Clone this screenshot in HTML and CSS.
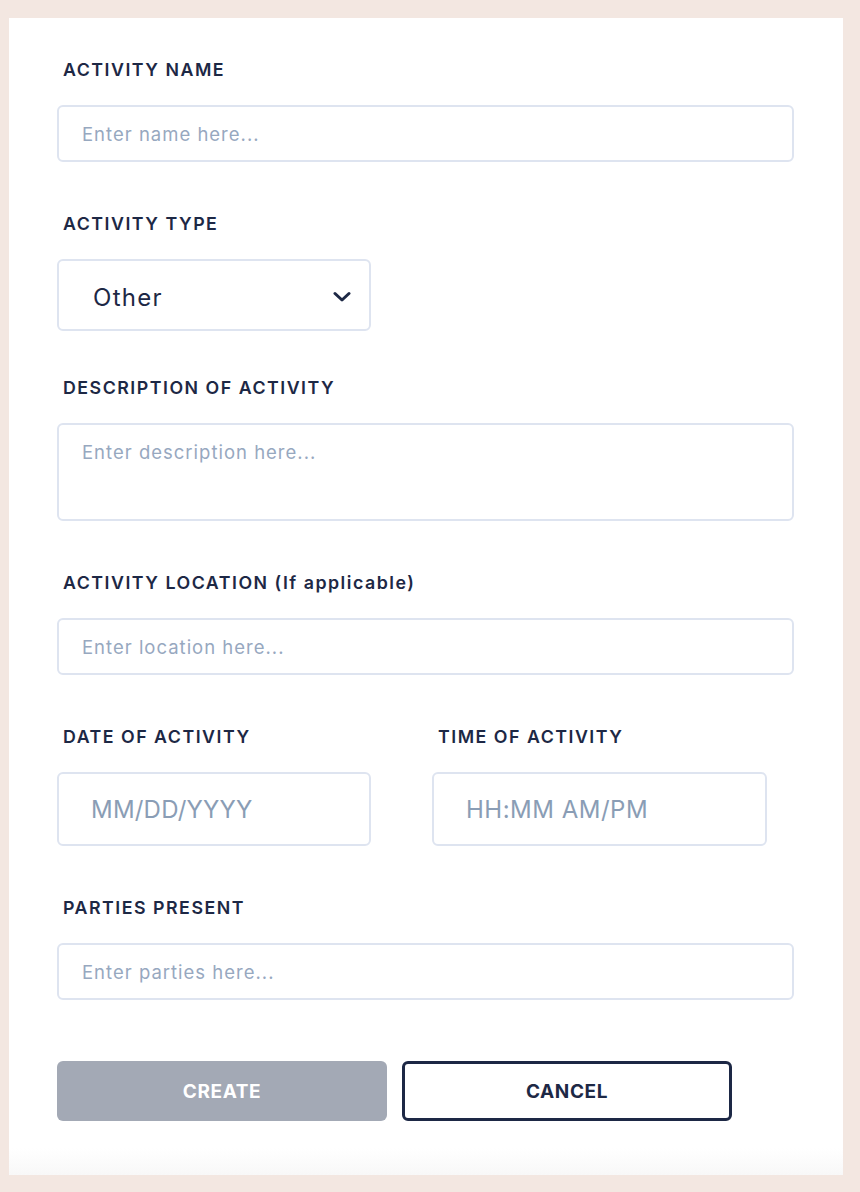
FILE: index.html
```html
<!DOCTYPE html>
<html lang="en">
<head>
<meta charset="utf-8">
<title>Create Activity</title>
<link rel="stylesheet" href="styles.css">
</head>
<body>
<form class="card">
  <div class="field">
    <label class="label" for="name">ACTIVITY NAME</label>
    <input class="input" id="name" type="text" placeholder="Enter name here...">
  </div>
  <div class="field field-select">
    <label class="label">ACTIVITY TYPE</label>
    <div class="select" role="combobox">
      <span class="select-value">Other</span>
      <svg class="chevron" width="18" height="12" viewBox="0 0 18 12"><path d="M2 2.5 L9 9 L16 2.5" fill="none" stroke="#1d2845" stroke-width="3" stroke-linecap="round" stroke-linejoin="round"/></svg>
    </div>
  </div>
  <div class="field">
    <label class="label" for="desc">DESCRIPTION OF ACTIVITY</label>
    <textarea class="input textarea" id="desc" placeholder="Enter description here..."></textarea>
  </div>
  <div class="field">
    <label class="label" for="loc">ACTIVITY LOCATION (If applicable)</label>
    <input class="input" id="loc" type="text" placeholder="Enter location here...">
  </div>
  <div class="row">
    <div class="field col-date">
      <label class="label" for="date">DATE OF ACTIVITY</label>
      <input class="input big" id="date" type="text" placeholder="MM/DD/YYYY">
    </div>
    <div class="field col-time">
      <label class="label" for="time">TIME OF ACTIVITY</label>
      <input class="input big big-time" id="time" type="text" placeholder="HH:MM AM/PM">
    </div>
  </div>
  <div class="field">
    <label class="label" for="parties">PARTIES PRESENT</label>
    <input class="input" id="parties" type="text" placeholder="Enter parties here...">
  </div>
  <div class="actions">
    <button type="button" class="btn btn-create">CREATE</button>
    <button type="button" class="btn btn-cancel">CANCEL</button>
  </div>
</form>
</body>
</html>
```
FILE: styles.css
```css
* { box-sizing: border-box; }
html, body {
  margin: 0;
  padding: 0;
}
body {
  background: #f3e7e1;
  font-family: "Inter", "Open Sans", sans-serif;
  color: #1d2845;
  height: 1192px;
  overflow: hidden;
}
.card {
  margin: 18px 0 0 9px;
  width: 834px;
  height: 1157px;
  background: linear-gradient(to bottom, #ffffff 0, #ffffff 1130px, #f8f8f8 1157px);
  padding: 42px 49px 0 48px;
  display: flex;
  flex-direction: column;
}
.field {
  display: flex;
  flex-direction: column;
  margin-bottom: 52px;
}
.field-select { margin-bottom: 47px; }
.label {
  display: block;
  font-size: 17.8px;
  line-height: 20px;
  font-weight: 600;
  letter-spacing: 1.5px;
  color: #1d2845;
  padding-left: 6px;
  margin-bottom: 25px;
  white-space: nowrap;
}
.input {
  display: block;
  width: 100%;
  height: 57px;
  border: 2.5px solid #dee4f0;
  border-radius: 6px;
  padding: 0 0 0 23px;
  font-family: inherit;
  font-size: 18.5px;
  letter-spacing: 1px;
  color: #1d2845;
  background: #fff;
  outline: none;
}
.input::placeholder { color: #97a8bf; opacity: 1; }
.textarea {
  height: 98px;
  resize: none;
  padding-top: 16px;
  line-height: 22px;
}
.select {
  width: 314px;
  height: 72px;
  border: 2.5px solid #dee4f0;
  border-radius: 6px;
  display: flex;
  align-items: center;
  justify-content: space-between;
  padding: 4px 18px 0 34px;
}
.select-value {
  font-size: 24px;
  letter-spacing: 1.3px;
  color: #1d2845;
}
.chevron { display: block; margin-top: 0; }
.row {
  display: flex;
  gap: 61px;
}
.col-date { width: 314px; }
.col-time { width: 335px; }
.big {
  height: 74px;
  font-size: 24px;
  letter-spacing: 0.2px;
  padding-left: 32px;
}
.big-time { letter-spacing: 0.5px; }
.big::placeholder { color: #8a9db5; }
.actions {
  display: flex;
  gap: 15px;
  margin-top: 9px;
}
.btn {
  width: 330px;
  height: 60px;
  border-radius: 6px;
  font-family: inherit;
  font-size: 19px;
  font-weight: 700;
  letter-spacing: 0.6px;
}
.btn-create {
  background: #a3a9b5;
  border: none;
  color: #ffffff;
}
.btn-cancel {
  background: #ffffff;
  border: 3px solid #1d2845;
  color: #1d2845;
}
```
